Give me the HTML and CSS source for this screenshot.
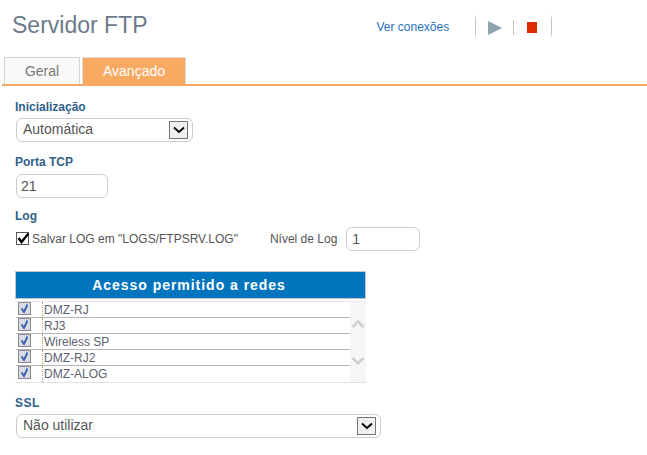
FILE: index.html
```html
<!DOCTYPE html>
<html lang="pt">
<head>
<meta charset="utf-8">
<title>Servidor FTP</title>
<link rel="stylesheet" href="styles.css">
</head>
<body>
<header class="top">
  <h1 class="title">Servidor FTP</h1>
  <div class="actions">
    <a class="link">Ver conexões</a>
    <span class="sep sep-a"></span>
    <svg class="ico-play" width="14" height="14" viewBox="0 0 14 14"><path d="M0 0L14 7L0 14Z" fill="#8ea3ae"/></svg>
    <span class="sep sep-b"></span>
    <span class="ico-stop"></span>
    <span class="sep sep-c"></span>
  </div>
</header>
<nav class="tabs">
  <div class="tab tab-off">Geral</div>
  <div class="tab tab-on">Avançado</div>
</nav>
<main class="form">
  <div class="label l-init">Inicialização</div>
  <div class="field sel sel-init"><span class="sel-text">Automática</span>
    <span class="arrow"><svg width="14" height="8" viewBox="0 0 14 8"><path d="M2 1.5L7 6L12 1.5" fill="none" stroke="#000" stroke-width="1.8"/></svg></span>
  </div>
  <div class="label l-tcp">Porta TCP</div>
  <div class="field inp-tcp">21</div>
  <div class="label l-log">Log</div>
  <div class="logrow">
    <span class="check"><svg width="13" height="13" viewBox="0 0 13 13"><path d="M2.5 6L5.5 10L12.5 1.5" fill="none" stroke="#000" stroke-width="2.4"/></svg></span>
    <span class="logtext">Salvar LOG em "LOGS/FTPSRV.LOG"</span>
    <span class="logtext level">Nível de Log</span>
    <div class="field inp-level">1</div>
  </div>
  <section class="grid">
    <div class="grid-head">Acesso permitido a redes</div>
    <div class="grid-body">
      <div class="rows">
        <div class="row"><span class="cb"><svg width="11" height="11" viewBox="0 0 11 11"><path d="M2.5 5.5L5 9L8.5 1.5" fill="none" stroke="#3d5aa8" stroke-width="1.8"/></svg></span><span class="name">DMZ-RJ</span></div>
        <div class="row"><span class="cb"><svg width="11" height="11" viewBox="0 0 11 11"><path d="M2.5 5.5L5 9L8.5 1.5" fill="none" stroke="#3d5aa8" stroke-width="1.8"/></svg></span><span class="name">RJ3</span></div>
        <div class="row"><span class="cb"><svg width="11" height="11" viewBox="0 0 11 11"><path d="M2.5 5.5L5 9L8.5 1.5" fill="none" stroke="#3d5aa8" stroke-width="1.8"/></svg></span><span class="name">Wireless SP</span></div>
        <div class="row"><span class="cb"><svg width="11" height="11" viewBox="0 0 11 11"><path d="M2.5 5.5L5 9L8.5 1.5" fill="none" stroke="#3d5aa8" stroke-width="1.8"/></svg></span><span class="name">DMZ-RJ2</span></div>
        <div class="row"><span class="cb"><svg width="11" height="11" viewBox="0 0 11 11"><path d="M2.5 5.5L5 9L8.5 1.5" fill="none" stroke="#3d5aa8" stroke-width="1.8"/></svg></span><span class="name">DMZ-ALOG</span></div>
      </div>
      <div class="scroll">
        <svg width="14" height="10" viewBox="0 0 14 10"><path d="M1.5 8L7 2.5L12.5 8" fill="none" stroke="#cfcfcf" stroke-width="2.6"/></svg>
        <svg width="14" height="10" viewBox="0 0 14 10"><path d="M1.5 2L7 7.5L12.5 2" fill="none" stroke="#cfcfcf" stroke-width="2.6"/></svg>
      </div>
    </div>
  </section>
  <div class="label l-ssl">SSL</div>
  <div class="field sel sel-ssl"><span class="sel-text">Não utilizar</span>
    <span class="arrow"><svg width="14" height="8" viewBox="0 0 14 8"><path d="M2 1.5L7 6L12 1.5" fill="none" stroke="#000" stroke-width="1.8"/></svg></span>
  </div>
</main>
</body>
</html>
```
FILE: styles.css
```css
* { box-sizing: border-box; }
html, body { margin: 0; padding: 0; }
body {
  width: 647px; height: 455px; overflow: hidden; background: #fff;
  font-family: "Liberation Sans", Arial, sans-serif; color: #555;
}
.top { display: flex; height: 57px; padding: 12px 0 0 12px; }
.title { margin: 0; font-size: 23px; line-height: 27px; font-weight: 400; color: #6c7a8c; }
.actions { display: flex; align-items: flex-start; margin-left: 229px; padding-top: 2px; }
.link { font-size: 12px; line-height: 26px; color: #2a6fba; width: 99px; }
.sep { display: block; width: 1px; height: 24px; background: linear-gradient(#fff, #c4c4c4 20%, #c4c4c4 80%, #fff); }
.ico-play { margin: 7px 0 0 12px; }
.sep-b { margin: 6px 0 0 11px; height: 15px; background: #c4c4c4; }
.ico-stop { display: block; width: 10px; height: 11px; margin: 8px 0 0 13px; background: #de2c00; }
.sep-c { margin-left: 14px; }
.tabs { display: flex; gap: 2px; height: 29px; border-bottom: 2px solid #f8a962; margin-left: 2px; padding-left: 2px; }
.tab { height: 27px; font-size: 14px; line-height: 27px; text-align: center; border: 1px solid #d4d4d4; border-bottom: 0; }
.tab-off { width: 76px; background: #f9f9f9; color: #7a7a7a; }
.tab-on { width: 104px; background: #f8a962; color: #fff; border-color: #dcdcdc; }
.form { padding: 14px 0 0 15px; }
.label { font-size: 12px; line-height: 14px; font-weight: 700; color: #2f6088; }
.field { border: 1px solid #ccc; border-radius: 6px; font-size: 14px; color: #555; background: #fff; }
.sel { display: flex; align-items: center; justify-content: space-between; height: 24px; margin: 4px 0 0 1px; padding: 0 4px 0 6px; }
.sel-text { position: relative; top: -1px; }
.sel-init { width: 177px; }
.sel-ssl { width: 365px; }
.arrow { display: flex; align-items: center; justify-content: center; width: 19px; height: 18px; border: 1px solid #777; background: #f0f0f0; }
.l-tcp { margin-top: 13px; }
.inp-tcp { width: 92px; height: 24px; line-height: 22px; margin: 5px 0 0 1px; padding-left: 4px; }
.l-log { margin-top: 11px; }
.logrow { display: flex; align-items: center; height: 24px; margin-top: 4px; }
.check { display: block; width: 13px; height: 13px; margin: -1px 0 0 1px; border: 1px solid #555; background: #fff; }
.check svg { display: block; margin: -1px; }
.logtext { font-size: 12px; color: #555; margin-left: 3px; }
.level { margin-left: 32px; }
.inp-level { width: 74px; height: 24px; line-height: 22px; margin-left: 9px; padding-left: 5px; }
.grid { width: 351px; margin-top: 20px; }
.grid-head { height: 28px; padding-right: 3px; background: #0075be; border: 1px solid #c6c6c6; color: #fff; font-size: 14px; font-weight: 700; letter-spacing: 0.97px; line-height: 26px; text-align: center; }
.grid-body { display: flex; margin-top: 2px; height: 82px; border-bottom: 1px solid #e2e2e2; border-top: 1px solid #eaeaea; }
.rows { flex: 1; padding-left: 1px; }
.row { display: flex; align-items: center; height: 16px; border-bottom: 1px solid #b5b5b5; }
.row:last-child { border-bottom: 0; }
.cb { display: block; align-self: flex-start; width: 13px; height: 13px; margin-left: 2px; border: 1px solid #8a8a8a; background: #d6dbe6; }
.cb svg { display: block; }
.name { margin-left: 11px; padding-left: 1px; height: 16px; font-size: 12px; line-height: 16px; color: #5c6270; border-left: 1px dotted #b0a080; }
.scroll { width: 16px; background: #f6f6f6; display: flex; flex-direction: column; align-items: center; gap: 27px; padding-top: 17px; }
.scroll svg { display: block; }
.l-ssl { margin-top: 13px; letter-spacing: 0.5px; }
.sel-ssl { margin-top: 4px; }
```
